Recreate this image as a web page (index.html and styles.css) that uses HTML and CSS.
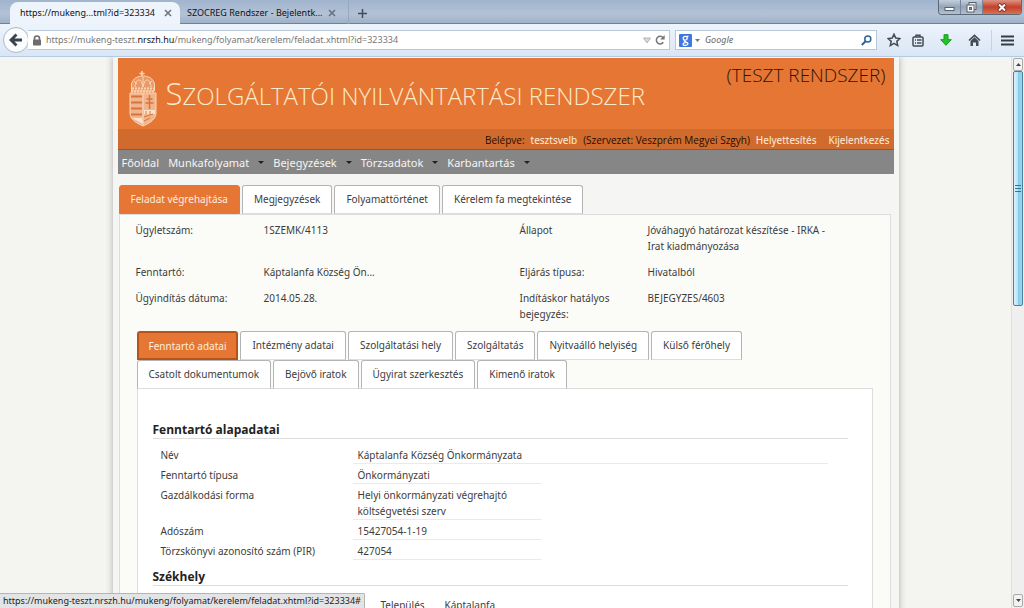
FILE: index.html
```html
<!DOCTYPE html>
<html lang="hu">
<head>
<meta charset="utf-8">
<title>Szolgáltatói nyilvántartási rendszer</title>
<link rel="stylesheet" href="styles.css">
</head>
<body>
<header class="titlebar">
  <div class="browser-tabs">
    <button class="browser-tab active"><span>https://mukeng...tml?id=323334</span><svg width="8" height="8" viewBox="0 0 8 8"><path d="M1 1l6 6M7 1L1 7" stroke="#707478" stroke-width="1.6"/></svg></button>
    <button class="browser-tab"><span>SZOCREG Rendszer - Bejelentk...</span><svg width="8" height="8" viewBox="0 0 8 8"><path d="M1 1l6 6M7 1L1 7" stroke="#67727f" stroke-width="1.6"/></svg></button>
    <button class="new-tab" aria-label="Új lap"><svg width="9" height="9" viewBox="0 0 9 9"><path d="M4.5 0v9M0 4.500h9" stroke="#434d59" stroke-width="1.500"/></svg></button>
  </div>
  <div class="window-buttons">
    <button aria-label="Kis méret"><svg width="11" height="9" viewBox="0 0 11 9"><rect x="1" y="4.500" width="9" height="3" fill="#fff" stroke="#58616d"/></svg></button>
    <button aria-label="Előző méret"><svg width="11" height="11" viewBox="0 0 11 11"><g fill="#dfe6ee" stroke="#58616d"><rect x="3" y=".5" width="7" height="7"/><rect x="1" y="3" width="7" height="7" fill="#fff"/><rect x="3.500" y="5.500" width="2" height="2" fill="#8d9bad"/></g></svg></button>
    <button class="close" aria-label="Bezárás"><svg width="10" height="9" viewBox="0 0 10 9"><path d="M1.500 1l7 7M8.500 1l-7 7" stroke="#6b2a22" stroke-width="3.600"/><path d="M2 1.500l6 6M8 1.500l-6 6" stroke="#fff" stroke-width="2"/></svg></button>
  </div>
</header>

<div class="toolbar">
  <button class="back" aria-label="Vissza"><svg width="14" height="14" viewBox="0 0 14 14"><path d="M13 7H3M7.500 1.500L2 7l5.500 5.500" fill="none" stroke="#39434e" stroke-width="2.800"/></svg></button>
  <div class="address">
    <svg width="10" height="11" viewBox="0 0 10 11"><path d="M2.500 5V3.500a2.500 2.500 0 015 0V5" fill="none" stroke="#6c6c6c" stroke-width="1.600"/><rect x="1" y="4.500" width="8" height="6" rx=".8" fill="#6c6c6c"/></svg>
    <div class="url">https://mukeng-teszt.<b>nrszh.hu</b>/mukeng/folyamat/kerelem/feladat.xhtml?id=323334</div>
    <svg width="8" height="7" viewBox="0 0 8 7"><path d="M.5 1h7L4 6z" fill="#d8d8d8" stroke="#b5b5b5"/></svg>
    <svg width="10" height="10" viewBox="0 0 10 10"><path d="M8.300 7.300A3.800 3.800 0 118 2.600" fill="none" stroke="#777" stroke-width="1.500"/><path d="M9.700 0v4.500H5.200z" fill="#777"/></svg>
  </div>
  <div class="search">
    <svg width="13" height="13" viewBox="0 0 13 13"><rect width="13" height="13" rx="1" fill="#3f78e0"/><g fill="none" stroke="#fff" stroke-width="1.300"><ellipse cx="6.200" cy="4.200" rx="2" ry="1.900"/><path d="M6 6.200c-1.500.8 0 1.500 1 1.900 3.500 1.400 1.500 3.300-.6 3.300-3 0-3.200-2.400.2-2.800M7.500 2.300h2"/></g></svg>
    <svg width="5" height="3" viewBox="0 0 5 3"><path d="M0 0h5L2.500 3z" fill="#777"/></svg>
    <input type="search" placeholder="Google" aria-label="Google keresés">
    <svg width="11" height="11" viewBox="0 0 11 11"><circle cx="6.800" cy="4" r="3" fill="none" stroke="#2f6395" stroke-width="1.500"/><path d="M4.600 6.300L.8 10" stroke="#2f6395" stroke-width="2"/></svg>
  </div>
  <div class="tools">
    <button aria-label="Könyvjelzőzés"><svg width="14" height="14" viewBox="0 0 14 14"><path d="M7 1.200l1.750 3.900 4.150.45-3.100 2.800.9 4.200L7 10.400l-3.700 2.150.9-4.200-3.100-2.800 4.150-.45z" fill="none" stroke="#424b56" stroke-width="1.500"/></svg></button>
    <button aria-label="Könyvjelzők"><svg width="12" height="13" viewBox="0 0 12 13"><rect x="1" y="3" width="10" height="9" rx="1" fill="none" stroke="#424b56" stroke-width="1.500"/><path d="M4 3V1.200h4V3M3 6h1M5 6h4.500M3 9h1M5 9h4.500" fill="none" stroke="#424b56" stroke-width="1.500"/></svg></button>
    <button aria-label="Letöltések"><svg width="12" height="12" viewBox="0 0 12 12"><path d="M4 .7h4v5h3.300L6 11.300.7 5.700H4z" fill="#22c322" stroke="#159a1d"/></svg></button>
    <button aria-label="Kezdőlap"><svg width="13" height="12" viewBox="0 0 13 12"><path d="M1 6.500L6.500 1.300 12 6.500" fill="none" stroke="#424b56" stroke-width="1.700"/><path d="M2.500 7l4-3.800 4 3.800v5H8V8.500H5V12H2.500z" fill="#424b56"/></svg></button>
    <button class="menu-button" aria-label="Menü"><svg width="13" height="11" viewBox="0 0 13 11"><path d="M0 1.500h13M0 5.500h13M0 9.500h13" stroke="#343c46" stroke-width="2.200"/></svg></button>
  </div>
</div>

<div class="viewport">
  <div class="canvas">
    <div class="page">
      <header class="banner">
        <div class="brand">
          <svg class="crest" width="28" height="56" viewBox="0 0 28 56">
            <g fill="none" stroke="#fbd5b4">
              <path d="M13 0v6M10.500 2.500h5" stroke-width="1.600"/>
              <path d="M2.500 20V13C4 7 9 5 14 5s10 2 11.500 8v7z" fill="#e99a68"/>
              <path d="M2 20.500h24M3 17.500h22" stroke-width="1.800" stroke-dasharray="2 1"/>
              <path d="M6 16c0-4 2-7 4-7s3 3 4 7c1-4 2-7 4-7s4 3 4 7M14 6v10M5 10l3 3M23 10l-3 3"/>
              <path d="M1 22h26v20c0 6-6 10-13 13C7 52 1 48 1 42z" fill="#f1b58d"/>
              <path d="M14 22v32"/>
            </g>
            <path d="M2 25.500h11M2 31.500h11M2 37.500h11M2 43.500h11" stroke="#d9733b" stroke-width="2"/>
            <path d="M20.500 24v14M17.500 28h6M16.500 32h8" stroke="#d9733b" stroke-width="1.500"/>
            <path d="M15 39h11v4H15zM3 47h10l1 6z" fill="#fbe3cf"/>
            <path d="M15 46l9-3M15 50l6-3M17 40v3M21 40v3" stroke="#d9733b"/>
          </svg>
          <h1 class="brand-name"><span class="initial">S</span>zolgáltatói nyilvántartási rendszer</h1>
          <div class="mode">(TESZT RENDSZER)</div>
        </div>
        <div class="session">
          <span>Belépve:</span><a href="#">tesztsvelb</a><span>(Szervezet: Veszprém Megyei Szgyh)</span><a href="#">Helyettesítés</a><a class="last" href="#">Kijelentkezés</a>
        </div>
      </header>
      <nav class="main-nav">
        <a href="#">Főoldal</a>
        <a class="has-menu" href="#">Munkafolyamat</a>
        <a class="has-menu" href="#">Bejegyzések</a>
        <a class="has-menu" href="#">Törzsadatok</a>
        <a class="has-menu" href="#">Karbantartás</a>
      </nav>
      <main class="task">
        <div class="tabs">
          <button class="tab selected">Feladat végrehajtása</button>
          <button class="tab">Megjegyzések</button>
          <button class="tab">Folyamattörténet</button>
          <button class="tab">Kérelem fa megtekintése</button>
        </div>
        <section class="task-panel">
          <table class="summary">
            <tr><th>Ügyletszám:</th><td class="wide">1SZEMK/4113</td><th>Állapot</th><td>Jóváhagyó határozat készítése - IRKA - Irat kiadmányozása</td><td class="rest"></td></tr>
            <tr><th>Fenntartó:</th><td class="wide">Káptalanfa Község Ön...</td><th>Eljárás típusa:</th><td>Hivatalból</td><td class="rest"></td></tr>
            <tr><th>Ügyindítás dátuma:</th><td class="wide">2014.05.28.</td><th>Indításkor hatályos bejegyzés:</th><td>BEJEGYZES/4603</td><td class="rest"></td></tr>
          </table>
          <div class="tabs">
            <button class="tab selected focused">Fenntartó adatai</button>
            <button class="tab">Intézmény adatai</button>
            <button class="tab">Szolgáltatási hely</button>
            <button class="tab">Szolgáltatás</button>
            <button class="tab">Nyitvaálló helyiség</button>
            <button class="tab">Külső férőhely</button>
          </div>
          <div class="tabs">
            <button class="tab">Csatolt dokumentumok</button>
            <button class="tab">Bejövő iratok</button>
            <button class="tab">Ügyirat szerkesztés</button>
            <button class="tab">Kimenő iratok</button>
          </div>
          <section class="data-panel">
            <h2>Fenntartó alapadatai</h2>
            <dl class="fields">
              <dt>Név</dt><dd class="long">Káptalanfa Község Önkormányzata</dd>
              <dt>Fenntartó típusa</dt><dd>Önkormányzati</dd>
              <dt>Gazdálkodási forma</dt><dd>Helyi önkormányzati végrehajtó költségvetési szerv</dd>
              <dt>Adószám</dt><dd>15427054-1-19</dd>
              <dt>Törzskönyvi azonosító szám (PIR)</dt><dd>427054</dd>
            </dl>
            <h2>Székhely</h2>
            <dl class="place"><dt>Település</dt><dd>Káptalanfa</dd></dl>
          </section>
        </section>
      </main>
    </div>
  </div>
  <div class="scrollbar">
    <button aria-label="Fel"><svg width="5" height="3" viewBox="0 0 5 3"><path d="M0 3h5L2.500 0z" fill="#444"/></svg></button>
    <div class="track"><div class="thumb"><svg width="6" height="7" viewBox="0 0 6 7"><path d="M0 .5h6M0 3.500h6M0 6.500h6" stroke="#2a7897"/></svg></div></div>
    <button aria-label="Le"><svg width="5" height="3" viewBox="0 0 5 3"><path d="M0 0h5L2.500 3z" fill="#444"/></svg></button>
  </div>
  <div class="status">https://mukeng-teszt.nrszh.hu/mukeng/folyamat/kerelem/feladat.xhtml?id=323334#</div>
</div>
</body>
</html>
```

FILE: styles.css
```css
* { box-sizing: border-box; }

body {
  margin: 0;
  height: 100vh;
  display: flex;
  flex-direction: column;
  overflow: hidden;
  font: 10px/16px "Noto Sans", sans-serif;
  color: #3c3c3c;
}

button, input {
  font: inherit;
  color: inherit;
  border: 0;
  margin: 0;
  padding: 0;
  background: none;
}

a { color: inherit; text-decoration: none; }
svg { flex: none; display: block; }

/* Browser window */
.titlebar {
  flex: none;
  height: 24px;
  display: flex;
  justify-content: space-between;
  align-items: flex-start;
  padding: 0 2px 0 10px;
  background: linear-gradient(#a0b4cd, #b3c2d6 60%, #9fb1c8);
  border-bottom: 1px solid #71839b;
  font: 9px/14px "Noto Sans", sans-serif;
  color: #111;
}
.browser-tabs { display: flex; height: 24px; }
.browser-tab {
  display: flex;
  align-items: center;
  justify-content: space-between;
  width: 168px;
  height: 22px;
  margin-top: 2px;
  padding: 0 8px 0 7px;
  white-space: nowrap;
}
.browser-tab.active {
  width: 170px;
  padding: 0 4px 0 10px;
  background: #edf4fc;
  border-radius: 8px 8px 0 0;
}
.browser-tab svg { margin-right: 4px; }
.new-tab { padding: 2px 9px 0; border-left: 1px solid #98a8bd; }
.window-buttons {
  display: flex;
  height: 15px;
  border: 1px solid #5d6876;
  border-top: 0;
  border-radius: 0 0 4px 4px;
  overflow: hidden;
}
.window-buttons button {
  width: 22px;
  display: flex;
  align-items: center;
  justify-content: center;
  background: linear-gradient(#c3cedb, #94a5b9 50%, #b3c1d0);
  border-right: 1px solid #75849a;
}
.window-buttons .close {
  width: 38px;
  border: 0;
  background: linear-gradient(#dd9483, #c4402b 50%, #dc7150);
}

.toolbar {
  flex: none;
  height: 33px;
  display: flex;
  align-items: center;
  padding: 0 10px 0 3px;
  background: linear-gradient(#edf4fc, #d9e6f5);
  border-bottom: 1px solid #b4cbe2;
  font: 9px/14px "Noto Sans", sans-serif;
}
.back {
  flex: none;
  width: 26px;
  height: 26px;
  display: flex;
  align-items: center;
  justify-content: center;
  border: 1px solid #a9b9cb;
  border-radius: 50%;
  background: #fafcfe;
}
.address, .search {
  height: 20px;
  display: flex;
  align-items: center;
  background: #fff;
  border: 1px solid #bac7d6;
}
.address {
  flex: 1;
  gap: 4px;
  margin-left: -1px;
  padding: 0 4px;
  border-left: 0;
}
.url { flex: 1; color: #777; white-space: nowrap; overflow: hidden; }
.url b { font-weight: 400; color: #111; }
.search {
  width: 202px;
  gap: 3px;
  margin-left: 5px;
  padding: 0 4px 0 3px;
}
.search input {
  flex: 1;
  min-width: 0;
  padding-left: 2px;
  outline: 0;
  appearance: none;
}
.search input::placeholder { color: #666; font-style: italic; opacity: 1; }
.tools { display: flex; align-items: center; margin-left: 10px; gap: 16px; }
.tools button { min-width: 12px; }
.tools button:first-child { margin-right: -5px; }
.tools .menu-button {
  margin-left: -6px;
  padding: 5px 0 5px 9px;
  border-left: 1px solid #c5d2e0;
}

.viewport { flex: 1; min-height: 0; display: flex; position: relative; }
.canvas { flex: 1; overflow: hidden; background: #f4f5f1; }
.scrollbar {
  flex: none;
  width: 13px;
  display: flex;
  flex-direction: column;
  padding: 1px;
  background: #efefef;
  border-left: 1px solid #e0e0e0;
}
.scrollbar button {
  height: 13px;
  display: flex;
  align-items: center;
  justify-content: center;
  border: 1px solid #aaa;
  border-radius: 2px;
  background: #f2f2f2;
}
.track { flex: 1; }
.thumb {
  height: 45%;
  display: flex;
  align-items: center;
  justify-content: center;
  border: 1px solid #4c8197;
  border-radius: 2px;
  background: linear-gradient(90deg, #d9f1fb, #b7e3f7 50%, #88cbea 55%, #9cd6ef);
}
.status {
  position: absolute;
  left: 0;
  bottom: 0;
  padding: 0 3px;
  background: #e3e4e6;
  border: 1px solid #b5b5b5;
  border-left: 0;
  border-bottom: 0;
  border-top-right-radius: 2px;
  font: 9px/14px "Noto Sans", sans-serif;
  color: #222;
}

/* Application page */
.page {
  max-width: 786px;
  min-height: 100%;
  margin: 0 auto;
  padding: 1px 5px 0;
  background: #f5f5f4;
  box-shadow: 0 0 7px #aaa;
}
.banner { background: #e67633; }
.brand { height: 71px; display: flex; }
.crest { margin: 13px 0 0 11px; }
.brand-name {
  flex: 1;
  margin: 15px 0 0 9px;
  font: 300 24px/40px "Open Sans", sans-serif;
  text-transform: uppercase;
  white-space: nowrap;
  color: #fdeacb;
}
.initial { font-size: 31px; }
.mode {
  margin: 4px 8px 0 0;
  font: 300 19px/26px "Open Sans", sans-serif;
  color: #2f1405;
  white-space: nowrap;
}
.session {
  height: 21px;
  display: flex;
  align-items: center;
  justify-content: flex-end;
  gap: 6px;
  padding: 1px 4px 0 0;
  background: #d16b2d;
  border-bottom: 1px solid #8c5a3a;
  color: #260d00;
}
.session span { font-family: "Open Sans", sans-serif; }
.session a { color: #fdeede; }
.session .last { margin-left: 6px; }
.main-nav {
  height: 24px;
  display: flex;
  align-items: center;
  gap: 9px;
  padding: 1px 0 0 4px;
  background: #868686;
  font-size: 11px;
  color: #f5f5f5;
}
.has-menu { display: flex; align-items: center; gap: 9px; }
.has-menu::after {
  content: "";
  border: 3px solid transparent;
  border-top-color: #222;
  border-bottom: 0;
}
.task { padding: 11px 3px 0 1px; }
.tabs { display: flex; flex-wrap: wrap; gap: 0 2px; }
.tab {
  height: 29px;
  padding: 0 11px 1px;
  background: #fff;
  border: 1px solid #b4b4b4;
  border-bottom-color: #ddd;
  border-radius: 3px 3px 0 0;
}
.tab.selected { background: #e67633; border-color: #e67633; color: #fdeede; }
.tab.focused { border: 2px solid #b4541c; padding: 0 10px; }
.task-panel {
  padding: 7px 17px 40px;
  background: #fbfcf8;
  border: 1px solid #ddd;
}
.summary {
  width: 100%;
  border-collapse: collapse;
  table-layout: fixed;
  margin-left: -1px;
}
.summary th, .summary td {
  width: 128px;
  padding: 0 10px 10px 0;
  font-weight: 400;
  text-align: left;
  vertical-align: top;
}
.summary tr:last-child > * { padding-bottom: 9px; }
.summary .wide { width: 256px; }
.summary td:nth-child(4) { width: 204px; }
.summary .rest { width: auto; padding: 0; }
.data-panel {
  padding: 33px 24px 40px 15px;
  background: #fff;
  border: 1px solid #ddd;
  margin-top: -1px;
}
.data-panel h2 {
  margin: 0;
  font: 700 12px/16px "Open Sans", sans-serif;
  color: #222;
  border-bottom: 1px solid #ddd;
}
.fields {
  display: grid;
  grid-template-columns: 192px 188px 1fr;
  gap: 3px 0;
  margin: 8px 20px 9px 8px;
}
.fields dt { grid-column: 1; white-space: nowrap; }
.fields dd {
  grid-column: 2;
  margin: 0;
  padding-left: 5px;
  border-bottom: 1px solid #eaeaea;
}
.fields .long { grid-column: 2 / 4; }
.place { display: flex; gap: 20px; margin: 11px 0 0 228px; }
.place dd { margin: 0; }
```
